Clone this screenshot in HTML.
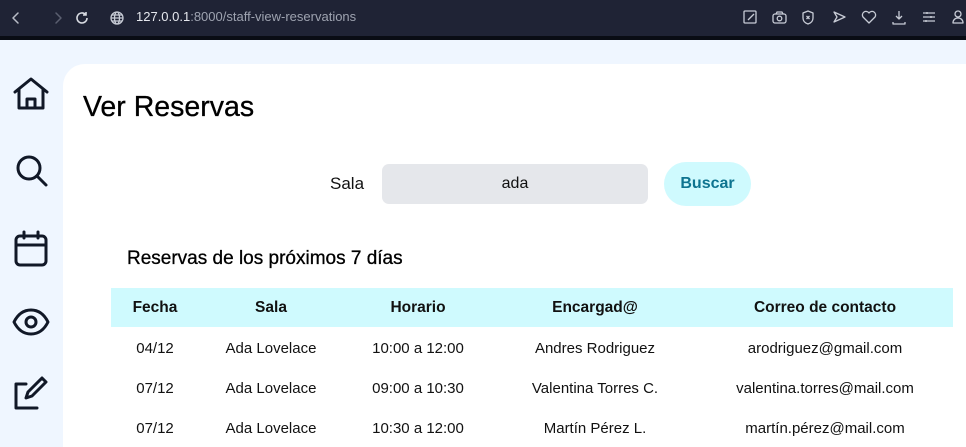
<!DOCTYPE html>
<html><head><meta charset="utf-8"><style>
*{margin:0;padding:0;box-sizing:border-box}
html,body{width:966px;height:447px;overflow:hidden}
body{background:#eff6ff;font-family:"Liberation Sans",sans-serif;position:relative;color:#111}
.bar{position:absolute;left:0;top:0;width:966px;height:36px;background:#1f2335}
.line{position:absolute;left:0;top:36px;width:966px;height:4px;background:#090c14}
.url{position:absolute;left:136px;top:9px;font-size:13px;color:#9ea3b0}
.url b{color:#e6e8ee;font-weight:normal}
.card{position:absolute;left:63px;top:64px;width:903px;height:383px;background:#fff;border-top-left-radius:22px}
.abs{position:absolute}
.c{position:absolute;transform:translateX(-50%);white-space:nowrap;font-size:15px}
.h{font-weight:bold;font-size:15.5px}
</style></head><body>
<div class="bar"></div><div class="line"></div>
<svg class="abs" style="left:8px;top:9px" width="80" height="18" fill="none" stroke-width="1.5" stroke-linecap="round" stroke-linejoin="round">
<path d="M10 4l-5 5 5 5" stroke="#b8bcc6"/><path d="M48 4l5 5-5 5" stroke="#5a5f70"/>
</svg>
<svg class="abs" style="left:74px;top:10px" width="16" height="16" fill="none" stroke="#d8dbe2" stroke-width="1.6"><path d="M13 8a5 5 0 1 1-1.5-3.6"/><path d="M12 2v3h-3"/></svg>
<svg class="abs" style="left:109px;top:10px" width="16" height="16" fill="none" stroke="#c8ccd6" stroke-width="1.3"><circle cx="8" cy="8" r="6"/><ellipse cx="8" cy="8" rx="2.5" ry="6"/><path d="M2 8h12M3 5h10M3 11h10"/></svg>
<div class="url"><b>127.0.0.1</b>:8000/staff-view-reservations</div>
<svg class="abs" style="left:740px;top:8px" width="226" height="20" fill="none" stroke="#c8ccd6" stroke-width="1.3" stroke-linejoin="round">
<rect x="4" y="3" width="12" height="12" rx="1"/><path d="M8 12l6-6"/>
<rect x="33" y="6" width="13" height="9" rx="2"/><circle cx="39.5" cy="10.5" r="2.3"/><path d="M36 6l1-2h5l1 2"/>
<path d="M68 3l5 2v5c0 3-2 5-5 6-3-1-5-3-5-6V5z"/><path d="M66.5 8l3 3M69.5 8l-3 3"/>
<path d="M94 4l11 5-11 5 3-5z"/>
<path d="M129 15l-6-6a3 3 0 0 1 6-4 3 3 0 0 1 6 4z"/>
<path d="M159 3v8M156 8l3 3 3-3M153 14v2h12v-2"/>
<path d="M183 5h12M183 9h12M183 13h12M187 4v2M191 8v2M186 12v2"/>
<circle cx="218" cy="6" r="3"/><path d="M213 15c0-3 2-5 5-5s5 2 5 5z"/>
</svg>
<svg class="abs" style="left:12px;top:76px" width="40" height="370" fill="none" stroke="#111827" stroke-width="3" stroke-linecap="round" stroke-linejoin="round">
<path d="M3 16L19 3l16 13M7 13v19h24V13M15 32v-9h8v9"/>
<circle cx="17" cy="92" r="11"/><path d="M25 100l9 9"/>
<rect x="4" y="160" width="30" height="29" rx="4"/><path d="M4 169h30M12 156v6M26 156v6"/>
<path d="M2 246c4-8 10-12 17-12s13 4 17 12c-4 8-10 12-17 12s-13-4-17-12z"/><circle cx="19" cy="246" r="5"/>
<path d="M30 310l4-4-4-4-14 14-2 6 6-2z" /><path d="M4 313v19h21"/><path d="M4 313v-5h10"/>
</svg>
<div class="card"></div>
<div class="abs" style="left:83px;top:91px;font-size:28.5px;color:#000;-webkit-text-stroke:0.3px #000">Ver Reservas</div>
<div class="abs" style="left:330px;top:174px;font-size:17px">Sala</div>
<div class="abs" style="left:382px;top:164px;width:266px;height:40px;background:#e5e7eb;border-radius:7px;text-align:center;line-height:40px;font-size:16px">ada</div>
<div class="abs" style="left:664px;top:162px;width:87px;height:44px;background:#cffafe;border-radius:22px;text-align:center;line-height:44px;font-size:16px;font-weight:bold;color:#0e7490">Buscar</div>
<div class="abs" style="left:127px;top:248px;font-size:19px;color:#000;-webkit-text-stroke:0.3px #000">Reservas de los próximos 7 días</div>
<div class="abs" style="left:111px;top:288px;width:842px;height:39px;background:#cffafe"></div>
<div class="c h" style="left:155px;top:299px">Fecha</div>
<div class="c h" style="left:271px;top:299px">Sala</div>
<div class="c h" style="left:418px;top:299px">Horario</div>
<div class="c h" style="left:595px;top:299px">Encargad@</div>
<div class="c h" style="left:825px;top:299px">Correo de contacto</div>
<div class="c" style="left:155px;top:340px">04/12</div><div class="c" style="left:271px;top:340px">Ada Lovelace</div><div class="c" style="left:418px;top:340px">10:00 a 12:00</div><div class="c" style="left:595px;top:340px">Andres Rodriguez</div><div class="c" style="left:825px;top:340px">arodriguez@gmail.com</div>
<div class="c" style="left:155px;top:380px">07/12</div><div class="c" style="left:271px;top:380px">Ada Lovelace</div><div class="c" style="left:418px;top:380px">09:00 a 10:30</div><div class="c" style="left:595px;top:380px">Valentina Torres C.</div><div class="c" style="left:825px;top:380px">valentina.torres@mail.com</div>
<div class="c" style="left:155px;top:420px">07/12</div><div class="c" style="left:271px;top:420px">Ada Lovelace</div><div class="c" style="left:418px;top:420px">10:30 a 12:00</div><div class="c" style="left:595px;top:420px">Martín Pérez L.</div><div class="c" style="left:825px;top:420px">martín.pérez@mail.com</div>
</body></html>
